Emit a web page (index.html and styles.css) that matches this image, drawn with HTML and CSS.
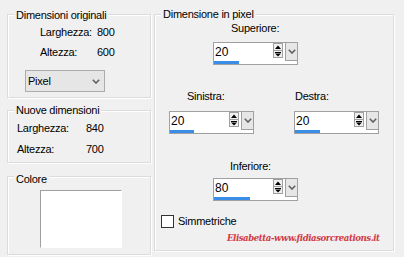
FILE: index.html
```html
<!DOCTYPE html>
<html>
<head>
<meta charset="utf-8">
<link rel="stylesheet" href="styles.css">
</head>
<body>
<div class="page">
  <div class="col-left">
    <div class="group g-orig">
      <div class="legend">Dimensioni originali</div>
      <div class="kv r1"><span class="k">Larghezza:</span><span>800</span></div>
      <div class="kv r2"><span class="k">Altezza:</span><span>600</span></div>
      <div class="select"><span>Pixel</span><svg width="8" height="5" viewBox="0 0 8 5"><path d="M0.8 0.8 L4 4 L7.2 0.8" fill="none" stroke="#606060" stroke-width="1.6"/></svg></div>
    </div>
    <div class="group g-new">
      <div class="legend">Nuove dimensioni</div>
      <div class="kv r1"><span class="k">Larghezza:</span><span>840</span></div>
      <div class="kv r2"><span class="k">Altezza:</span><span>700</span></div>
    </div>
    <div class="group g-col">
      <div class="legend">Colore</div>
      <div class="swatch"></div>
    </div>
  </div>
  <div class="group g-pixel">
    <div class="legend">Dimensione in pixel</div>
    <div class="field f-top">
      <div class="flabel fl-sup">Superiore:</div>
      <div class="spin">
        <div class="spin-val">20</div>
        <div class="spin-arrows"><svg width="12" height="18" viewBox="0 0 12 18"><rect x="0.5" y="0.5" width="9" height="14" fill="#f0f0f0" stroke="#a0a0a0"/><path d="M5 2.5 L8 6 L2 6 Z" fill="#000"/><path d="M1 7.5 H9" stroke="#a0a0a0"/><path d="M2 9.5 H8" stroke="#000"/><path d="M2 10.5 L8 10.5 L5 13.5 Z" fill="#000"/></svg></div>
        <div class="spin-btn"><svg width="8" height="5" viewBox="0 0 8 5"><path d="M0.8 0.8 L4 4 L7.2 0.8" fill="none" stroke="#606060" stroke-width="1.6"/></svg></div>
        <div class="spin-track"><div class="bar" style="width:25px"></div></div>
      </div>
    </div>
    <div class="row-mid">
      <div class="field">
        <div class="flabel fl-sin">Sinistra:</div>
        <div class="spin">
          <div class="spin-val">20</div>
          <div class="spin-arrows"><svg width="12" height="18" viewBox="0 0 12 18"><rect x="0.5" y="0.5" width="9" height="14" fill="#f0f0f0" stroke="#a0a0a0"/><path d="M5 2.5 L8 6 L2 6 Z" fill="#000"/><path d="M1 7.5 H9" stroke="#a0a0a0"/><path d="M2 9.5 H8" stroke="#000"/><path d="M2 10.5 L8 10.5 L5 13.5 Z" fill="#000"/></svg></div>
          <div class="spin-btn"><svg width="8" height="5" viewBox="0 0 8 5"><path d="M0.8 0.8 L4 4 L7.2 0.8" fill="none" stroke="#606060" stroke-width="1.6"/></svg></div>
          <div class="spin-track"><div class="bar" style="width:24px"></div></div>
        </div>
      </div>
      <div class="field">
        <div class="flabel fl-des">Destra:</div>
        <div class="spin">
          <div class="spin-val">20</div>
          <div class="spin-arrows"><svg width="12" height="18" viewBox="0 0 12 18"><rect x="0.5" y="0.5" width="9" height="14" fill="#f0f0f0" stroke="#a0a0a0"/><path d="M5 2.5 L8 6 L2 6 Z" fill="#000"/><path d="M1 7.5 H9" stroke="#a0a0a0"/><path d="M2 9.5 H8" stroke="#000"/><path d="M2 10.5 L8 10.5 L5 13.5 Z" fill="#000"/></svg></div>
          <div class="spin-btn"><svg width="8" height="5" viewBox="0 0 8 5"><path d="M0.8 0.8 L4 4 L7.2 0.8" fill="none" stroke="#606060" stroke-width="1.6"/></svg></div>
          <div class="spin-track"><div class="bar" style="width:25px"></div></div>
        </div>
      </div>
    </div>
    <div class="field f-bot">
      <div class="flabel fl-inf">Inferiore:</div>
      <div class="spin">
        <div class="spin-val">80</div>
        <div class="spin-arrows"><svg width="12" height="18" viewBox="0 0 12 18"><rect x="0.5" y="0.5" width="9" height="14" fill="#f0f0f0" stroke="#a0a0a0"/><path d="M5 2.5 L8 6 L2 6 Z" fill="#000"/><path d="M1 7.5 H9" stroke="#a0a0a0"/><path d="M2 9.5 H8" stroke="#000"/><path d="M2 10.5 L8 10.5 L5 13.5 Z" fill="#000"/></svg></div>
        <div class="spin-btn"><svg width="8" height="5" viewBox="0 0 8 5"><path d="M0.8 0.8 L4 4 L7.2 0.8" fill="none" stroke="#606060" stroke-width="1.6"/></svg></div>
        <div class="spin-track"><div class="bar" style="width:36px"></div></div>
      </div>
    </div>
    <div class="check-row">
      <span class="checkbox"></span><span>Simmetriche</span>
    </div>
    <div class="watermark">Elisabetta-www.fidiasorcreations.it</div>
  </div>
</div>
</body>
</html>
```

FILE: styles.css
```css
html, body {
  margin: 0;
  padding: 0;
}
body {
  background: #f0f0f0;
  font: 11px/13px "Liberation Sans", Arial, sans-serif;
  letter-spacing: -0.25px;
  color: #000;
  width: 404px;
  height: 257px;
  overflow: hidden;
}
.page {
  display: flex;
  align-items: flex-start;
  gap: 3px;
  padding: 14px 0 0 7px;
}
.col-left {
  width: 144px;
  display: flex;
  flex-direction: column;
}
.group {
  box-sizing: border-box;
  border: 1px solid #dcdcdc;
  box-shadow: inset 1px 1px 0 #fff, 1px 1px 0 #fff;
}
.legend {
  width: max-content;
  background: #f0f0f0;
  padding: 0 2px;
  margin-left: 6px;
}
.kv {
  display: flex;
}
/* Dimensioni originali */
.g-orig {
  padding-bottom: 5px;
}
.g-orig .legend { margin-top: -6px; }
.g-orig .kv { padding-left: 32px; }
.g-orig .k { width: 57px; }
.g-orig .r1 { margin-top: 4px; }
.g-orig .r2 { margin-top: 7px; }
.select {
  box-sizing: border-box;
  margin: 11px 0 0 17px;
  width: 80px;
  height: 22px;
  border: 1px solid #acacac;
  background: #e6e6e6;
  display: flex;
  align-items: center;
  justify-content: space-between;
  padding: 0 4px 0 2px;
}
/* Nuove dimensioni */
.g-new {
  margin-top: 12px;
  padding-bottom: 6px;
}
.g-new .legend { margin-top: -7px; }
.g-new .kv { padding-left: 9px; }
.g-new .k { width: 69px; }
.g-new .r1 { margin-top: 5px; }
.g-new .r2 { margin-top: 8px; }
/* Colore */
.g-col {
  margin-top: 13px;
  padding-bottom: 6px;
}
.g-col .legend { margin-top: -4px; }
.swatch {
  box-sizing: border-box;
  margin: 4px 0 0 32px;
  width: 82px;
  height: 58px;
  background: #fff;
  border-top: 1px solid #a0a0a0;
  border-left: 1px solid #a0a0a0;
  border-right: 1px solid #fff;
  border-bottom: 1px solid #fff;
}
/* Dimensione in pixel */
.g-pixel {
  width: 240px;
  height: 237px;
}
.g-pixel .legend { margin-top: -7px; }
.field {
  width: 85px;
}
.f-top {
  margin: 1px 0 0 58px;
}
.fl-sup { padding-left: 18px; margin-bottom: 7px; }
.row-mid {
  display: flex;
  gap: 40px;
  margin: 25px 0 0 14px;
}
.fl-sin { padding-left: 18px; margin-bottom: 8px; }
.fl-des { padding-left: 1px; margin-bottom: 8px; }
.f-bot {
  margin: 26px 0 0 58px;
}
.fl-inf { padding-left: 17px; margin-bottom: 5px; }
.spin {
  box-sizing: border-box;
  width: 85px;
  display: grid;
  grid-template-columns: 59px 12px 12px;
  grid-template-rows: 18px 3px;
  border: 1px solid #a0a0a0;
  background: #fff;
}
.spin-val {
  padding-left: 1px;
  font-size: 12px;
  line-height: 18px;
  letter-spacing: 0;
}
.spin-arrows svg,
.spin-btn svg {
  display: block;
}
.spin-btn {
  background: #e6e6e6;
  border-left: 1px solid #a0a0a0;
  border-bottom: 1px solid #a0a0a0;
  display: flex;
  align-items: center;
  justify-content: center;
}
.spin-track {
  grid-column: 1 / -1;
  background: #fff;
}
.bar {
  height: 3px;
  background: #3b8ee8;
}
.check-row {
  display: flex;
  align-items: center;
  gap: 4px;
  margin: 14px 0 0 6px;
}
.checkbox {
  box-sizing: border-box;
  width: 13px;
  height: 13px;
  border: 1px solid #333;
  background: #fff;
}
.watermark {
  margin-top: 4px;
  padding-left: 72px;
  font: italic bold 8.6px/13px "DejaVu Serif", serif;
  letter-spacing: -0.45px;
  color: #d13a47;
  white-space: nowrap;
}
```
